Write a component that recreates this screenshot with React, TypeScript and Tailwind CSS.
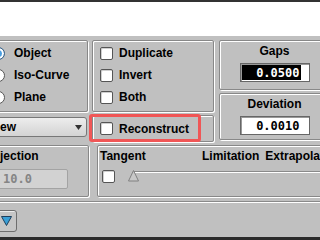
import React from "react";

function Group({ className = "", children }: { className?: string; children?: React.ReactNode }) {
  return (
    <div
      className={
        "border border-[#888888] rounded-[2px] shadow-[inset_1px_1px_0_#ffffff,1px_1px_0_#ffffff] " + className
      }
    >
      {children}
    </div>
  );
}

function Check() {
  return (
    <div className="w-[13px] h-[13px] shrink-0 bg-white border border-[#555555] rounded-[2px] shadow-[inset_1px_1px_0_#cfcfcf]" />
  );
}

function Radio({ selected = false }: { selected?: boolean }) {
  return selected ? (
    <div className="w-[13px] h-[13px] shrink-0 rounded-full border border-[#3d5f80] bg-[#4a9ee0] shadow-[inset_0_0_0_2px_#ffffff]" />
  ) : (
    <div className="w-[13px] h-[13px] shrink-0 rounded-full border border-[#555555] bg-white" />
  );
}

function RadioRow({ label, selected = false }: { label: string; selected?: boolean }) {
  return (
    <div className="h-[22px] flex items-center pl-[15px]">
      <Radio selected={selected} />
      <span className="ml-[9px]">{label}</span>
    </div>
  );
}

function CheckRow({ label }: { label: string }) {
  return (
    <div className="h-[22px] flex items-center pl-[7px]">
      <Check />
      <span className="ml-[6px]">{label}</span>
    </div>
  );
}

export default function App() {
  return (
    <div className="relative w-[320px] h-[240px] overflow-hidden flex flex-col bg-[#c0c0c0] text-[12px] leading-none font-bold text-black [font-family:'Liberation_Sans',Arial,sans-serif]">
      <div className="h-[2px] bg-[#333333] shrink-0" />
      <div className="h-[34px] bg-white shrink-0" />
      <div className="flex-1 flex flex-col pt-[4px]">
        {/* row 1 */}
        <div className="flex ml-[-24px] h-[102px] shrink-0">
          <div className="w-[112px] flex flex-col shrink-0">
            <Group className="h-[72px] flex flex-col pt-[1px]">
              <RadioRow label="Object" selected />
              <RadioRow label="Iso-Curve" />
              <RadioRow label="Plane" />
            </Group>
            <div className="mt-[5px] h-[20px] w-[111px] border border-[#777777] rounded-[3px] bg-gradient-to-b from-[#ededed] to-[#d3d3d3] flex items-center justify-between pl-[12px] pr-[4px]">
              <span>View</span>
              <svg width="7" height="5" viewBox="0 0 7 5">
                <path d="M0 0 L7 0 L3.5 5 Z" fill="#333333" />
              </svg>
            </div>
          </div>
          <div className="ml-[4px] w-[122px] flex flex-col shrink-0">
            <Group className="h-[72px] flex flex-col pt-[1px]">
              <CheckRow label="Duplicate" />
              <CheckRow label="Invert" />
              <CheckRow label="Both" />
            </Group>
            <Group className="mt-[3px] h-[27px] flex items-center pl-[7px]">
              <Check />
              <span className="ml-[6px]">Reconstruct</span>
            </Group>
          </div>
          <div className="ml-[5px] w-[111px] flex flex-col shrink-0">
            <Group className="h-[50px] flex flex-col items-center">
              <div className="h-[20px] flex items-center">Gaps</div>
              <div className="mt-[2px] w-[70px] h-[19px] bg-white border border-[#666666] shadow-[inset_1px_1px_0_#999999] flex items-stretch justify-end p-[1px] [font-family:'DejaVu_Sans_Mono',monospace] font-bold">
                <span className="bg-black text-white w-[58px] flex items-center justify-end">0.0500</span>
                <span className="w-[1px] bg-black" />
                <span className="w-[7px]" />
              </div>
            </Group>
            <Group className="mt-[3px] h-[47px] flex flex-col items-center">
              <div className="h-[19px] flex items-center">Deviation</div>
              <div className="mt-[3px] w-[70px] h-[19px] bg-white border border-[#666666] shadow-[inset_1px_1px_0_#999999] flex items-center justify-end pr-[9px] [font-family:'DejaVu_Sans_Mono',monospace] font-bold">
                0.0010
              </div>
            </Group>
          </div>
        </div>
        {/* row 2 */}
        <div className="flex ml-[-24px] mt-[3px] h-[52px] shrink-0">
          <Group className="w-[113px] shrink-0 flex flex-col">
            <div className="h-[20px] flex items-center pl-[3px]">Projection</div>
            <div className="mt-[3px] ml-[19px] w-[72px] h-[20px] bg-[#d2d2d2] border border-[#a3a3a3] rounded-[2px] flex items-center pl-[6px] text-[#858585] [font-family:'DejaVu_Sans_Mono',monospace] font-bold">
              10.0
            </div>
          </Group>
          <Group className="ml-[8px] w-[240px] shrink-0 flex flex-col overflow-hidden">
            <div className="h-[20px] flex items-center pl-[2px] whitespace-nowrap">
              <span className="w-[102px] shrink-0">Tangent</span>
              <span className="shrink-0">Limitation</span>
              <span className="ml-[6px] shrink-0">Extrapolation</span>
            </div>
            <div className="mt-[4px] flex items-start pl-[4px]">
              <Check />
              <div className="relative ml-[13px] flex-1 h-[12px]">
                <div className="absolute left-[5px] right-0 top-[1px] h-[2px] border-t border-[#8a8a8a] border-b border-b-white" />
                <svg className="absolute left-0 top-[0px]" width="11" height="12" viewBox="0 0 11 12">
                  <path d="M5.5 0.5 L10.5 11 L0.5 11 Z" fill="#c8c8c8" stroke="#808080" strokeWidth="1" />
                </svg>
              </div>
            </div>
          </Group>
        </div>
        {/* separator */}
        <div className="mt-[4px] h-[2px] border-t border-[#8a8a8a] border-b border-b-white shrink-0" />
        {/* bottom buttons */}
        <div className="mt-[7px] flex">
          <div className="ml-[-4px] w-[21px] h-[22px] bg-[#c6c6c6] border border-[#6e6e6e] rounded-[3px] shadow-[inset_1px_1px_0_#ececec] flex items-center justify-center">
            <svg width="11" height="10" viewBox="0 0 11 10">
              <path d="M0.5 0.5 L10.5 0.5 L5.5 9.5 Z" fill="#3a9fd6" stroke="#1f3f5c" strokeWidth="1" />
            </svg>
          </div>
        </div>
      </div>
      <div className="h-[3px] bg-[#2b2b2b] shrink-0" />
      <div className="absolute left-[89px] top-[114px] w-[112px] h-[28px] border-[3px] border-[#f05656] rounded-[3px]" />
    </div>
  );
}
